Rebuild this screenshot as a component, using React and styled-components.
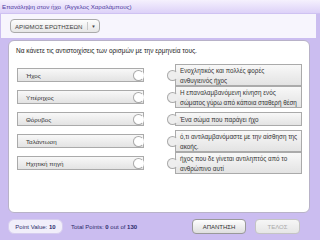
import { Fragment } from "react";
import styled, { createGlobalStyle } from "styled-components";

const GlobalStyle = createGlobalStyle`
  html, body {
    margin: 0;
    padding: 0;
  }
  body {
    width: 320px;
    height: 240px;
    overflow: hidden;
    background: #cbbdf0;
    font-family: "Liberation Sans", Arial, sans-serif;
  }
`;

const Page = styled.div`
  width: 320px;
  height: 240px;
  display: flex;
  flex-direction: column;
  background: #cbbdf0;
`;

const TitleBar = styled.div`
  height: 13px;
  flex: none;
  display: flex;
  align-items: center;
  padding-left: 2px;
  background: linear-gradient(#f5f1fd, #ddd1f8);
  border-bottom: 1px solid #cfc2f2;
  font-size: 6.2px;
  color: #4d3aa0;
  white-space: pre;
`;

const Toolbar = styled.div`
  height: 24px;
  flex: none;
  display: flex;
  align-items: center;
  margin: 0 4px 0 1px;
  padding-left: 9px;
  background: #f7f5fd;
`;

const Dropdown = styled.div`
  width: 90px;
  height: 14px;
  box-sizing: border-box;
  display: flex;
  align-items: stretch;
  border: 1px solid #aaa;
  border-radius: 4px;
  background: linear-gradient(#fdfdfd, #e6e6e6);
  color: #444;
  font-size: 6.1px;
`;

const DropLabel = styled.div`
  flex: 1;
  display: flex;
  align-items: center;
  padding-left: 4px;
`;

const DropArrow = styled.div`
  width: 11px;
  display: flex;
  align-items: center;
  justify-content: center;
  border-left: 1px solid #c8c8c8;
  margin: 2px 0;
  font-size: 4.5px;
`;

const Body = styled.div`
  flex: 1;
  display: flex;
  flex-direction: column;
  padding: 2px 10px 0 8px;
`;

const Card = styled.div`
  height: 173px;
  box-sizing: border-box;
  background: #fff;
  border: 1px solid #b8b2c8;
  border-radius: 6px;
  padding: 4px 8px 0 8px;
`;

const Question = styled.div`
  margin-left: -1px;
  font-size: 6.5px;
  line-height: 12px;
  color: #222;
`;

const Pairs = styled.div`
  margin-top: 7px;
  display: grid;
  grid-template-columns: 127px 127px;
  grid-auto-rows: 22px;
  column-gap: 31px;
  align-items: center;
`;

const Term = styled.div`
  position: relative;
  height: 14px;
  box-sizing: border-box;
  display: flex;
  align-items: center;
  padding-left: 8px;
  border: 1px solid #aaa;
  background: linear-gradient(#f8f8f8, #e3e3e3);
  font-size: 6.2px;
  color: #333;
`;

const Notch = styled.span`
  position: absolute;
  right: -1px;
  top: 50%;
  width: 11px;
  height: 11px;
  margin-top: -5.5px;
  box-sizing: border-box;
  border-radius: 50%;
  border: 1px solid #aaa;
  border-right-color: transparent;
  background: #fff;
`;

const Meaning = styled.div`
  position: relative;
  min-height: 14px;
  box-sizing: border-box;
  display: flex;
  align-items: center;
  padding: 1px 3px 0 4px;
  border: 1px solid #aaa;
  background: linear-gradient(#f8f8f8, #e3e3e3);
  font-size: 6.3px;
  line-height: 9.5px;
  color: #333;
`;

const Knob = styled.span`
  position: absolute;
  left: -9px;
  top: 50%;
  width: 11px;
  height: 11px;
  margin-top: -5.5px;
  box-sizing: border-box;
  border-radius: 50%;
  border: 1px solid #aaa;
  border-right-color: transparent;
  background: #eee;
`;

const Footer = styled.div`
  height: 27px;
  display: flex;
  align-items: center;
  padding: 0 10px 0 0;
  font-size: 6px;
  color: #2b2b6b;
`;

const Pill = styled.div`
  width: 55px;
  height: 15px;
  box-sizing: border-box;
  display: flex;
  align-items: center;
  justify-content: center;
  border-radius: 6px;
  border: 1px solid #d6cdef;
  background: #f1eefa;
`;

const Total = styled.div`
  margin-left: 8px;
`;

const Button = styled.div`
  width: ${(p) => p.$w}px;
  height: 15px;
  box-sizing: border-box;
  display: flex;
  align-items: center;
  justify-content: center;
  margin-left: ${(p) => p.$ml};
  border-radius: 4px;
  border: 1px solid ${(p) => (p.$disabled ? "#c4c4c4" : "#999")};
  background: ${(p) =>
    p.$disabled
      ? "linear-gradient(#f6f6f6, #e6e6e6)"
      : "linear-gradient(#fefefe, #dedede)"};
  color: ${(p) => (p.$disabled ? "#aaa" : "#333")};
  font-size: 6px;
`;

const rows = [
  ["Ήχος", "Ενοχλητικός και πολλές φορές ανθυγιεινός ήχος"],
  ["Υπέρηχος", "Η επαναλαμβανόμενη κίνηση ενός σώματος γύρω από κάποια σταθερή θέση"],
  ["Θόρυβος", "Ένα σώμα που παράγει ήχο"],
  ["Ταλάντωση", "ό,τι αντιλαμβανόμαστε με την αίσθηση της ακοής."],
  ["Ηχητική πηγή", "ήχος που δε γίνεται αντιληπτός από το ανθρώπινο αυτί"],
];

export default function App() {
  return (
    <>
      <GlobalStyle />
      <Page>
        <TitleBar>Επανάληψη στον ήχο  (Άγγελος Χαραλάμπους)</TitleBar>
        <Toolbar>
          <Dropdown>
            <DropLabel>ΑΡΙΘΜΟΣ ΕΡΩΤΗΣΕΩΝ</DropLabel>
            <DropArrow>▼</DropArrow>
          </Dropdown>
        </Toolbar>
        <Body>
          <Card>
            <Question>
              Να κάνετε τις αντιστοιχίσεις των ορισμών με την ερμηνεία τους.
            </Question>
            <Pairs>
              {rows.map(([term, meaning]) => (
                <Fragment key={term}>
                  <Term>
                    {term}
                    <Notch />
                  </Term>
                  <Meaning>
                    {meaning}
                    <Knob />
                  </Meaning>
                </Fragment>
              ))}
            </Pairs>
          </Card>
          <Footer>
            <Pill>
              Point Value:&nbsp;<b>10</b>
            </Pill>
            <Total>
              Total Points: <b>0</b> out of <b>130</b>
            </Total>
            <Button $w={54} $ml="auto">
              ΑΠΑΝΤΗΣΗ
            </Button>
            <Button $w={45} $ml="9px" $disabled>
              ΤΕΛΟΣ
            </Button>
          </Footer>
        </Body>
      </Page>
    </>
  );
}
